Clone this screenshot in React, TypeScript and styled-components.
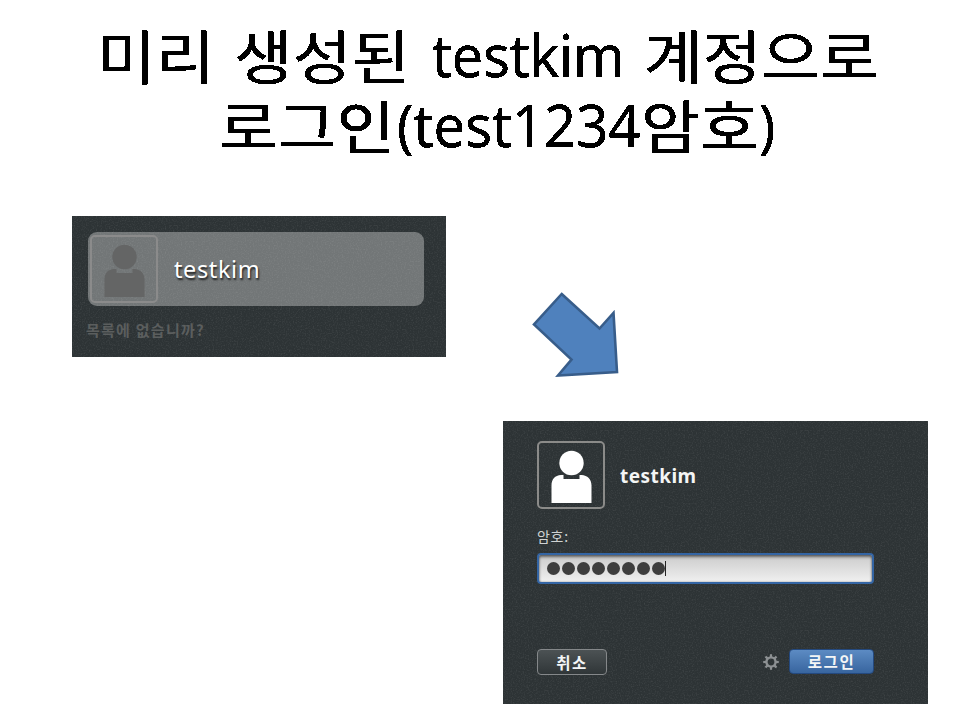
import React from "react";
import styled, { createGlobalStyle, css } from "styled-components";

const noise = `url("data:image/svg+xml,${encodeURIComponent(
  '<svg xmlns="http://www.w3.org/2000/svg" width="200" height="200"><filter id="n"><feTurbulence type="fractalNoise" baseFrequency="0.75" numOctaves="2" seed="4" stitchTiles="stitch"/><feColorMatrix values="0 0 0 0 1  0 0 0 0 1  0 0 0 0 1  0.9 0 0 0 -0.42"/></filter><rect width="200" height="200" filter="url(#n)" opacity="0.22"/></svg>'
)}")`;

const GlobalStyle = createGlobalStyle`
  * { box-sizing: border-box; }
  body { margin: 0; background: #fff; overflow: hidden; }
`;

const Slide = styled.main`
  width: 960px;
  height: 720px;
  background: #fff;
  overflow: hidden;
  font-family: "Noto Sans", "Noto Sans CJK KR", sans-serif;
`;

const Title = styled.h1`
  margin: 0;
  height: 216px;
  padding-top: 22px;
  font-weight: 400;
  color: #000;
  filter: url(#crisp);
`;

const TitleLine = styled.span<{ $indent: number }>`
  display: flex;
  height: 70px;
  padding-left: ${(p) => p.$indent}px;
  line-height: 70px;
  white-space: nowrap;
`;

const Word = styled.span<{ $width: number; $latin?: boolean; $scale?: number }>`
  flex: none;
  width: ${(p) => p.$width}px;
  transform-origin: 0 50%;
  ${(p) =>
    p.$latin
      ? css`
          height: 70px;
          font: 400 59px/65px "Open Sans", sans-serif;
          -webkit-text-stroke: 0.6px #000;
        `
      : css`
          height: 70px;
          font: 400 58px/64px "Noto Sans CJK KR", sans-serif;
          -webkit-text-stroke: 0.5px #000;
        `}
  transform: scaleX(${(p) => p.$scale ?? (p.$latin ? 1 : 1.1)});
`;

const Stage = styled.div`
  display: grid;
  grid-template-columns: 431px 425px;
  grid-template-rows: 205px 283px;
  margin-left: 72px;
`;

const Panel = styled.section`
  background: ${noise}, #2d3335;
`;

const UserListPanel = styled(Panel)`
  width: 374px;
  height: 141px;
  padding: 16px 22px 0 16px;
`;

const LoginPanel = styled(Panel)`
  grid-column: 2;
  height: 283px;
  padding: 20px 54px 0 34px;
`;

const UserRow = styled.div`
  display: flex;
  align-items: center;
  height: 74px;
  padding-left: 2px;
  border-radius: 9px;
  background: ${noise}, #727677;
`;

const UserName = styled.span`
  margin: 0 0 1px 16px;
  font: 400 23.5px/32px "Noto Sans", sans-serif;
  letter-spacing: 0.6px;
  color: #fff;
  text-shadow: 1px 2px 2px rgba(0, 0, 0, 0.75);
`;

const NotListed = styled.div`
  margin: 14px 0 0 -2px;
  font: 700 15px/20px "Noto Sans CJK KR", sans-serif;
  letter-spacing: 1.25px;
  color: #5b5e5e;
`;

const ArrowSlot = styled.div`
  padding: 75px 0 0 28px;
`;

const AccountHeader = styled.div`
  display: flex;
  align-items: center;
  height: 68px;
`;

const AccountName = styled.strong`
  margin: 1px 0 0 15px;
  font: 700 19px/28px "Noto Sans", sans-serif;
  letter-spacing: 0.45px;
  color: #f4f5f5;
`;

const PasswordLabel = styled.label`
  display: block;
  margin-top: 17px;
  font: 400 14px/20px "Noto Sans CJK KR", sans-serif;
  letter-spacing: 0.7px;
  color: #cfd2d2;
`;

const PasswordField = styled.div`
  display: flex;
  align-items: center;
  gap: 2px;
  width: 337px;
  height: 31px;
  margin-top: 7px;
  padding-left: 7.5px;
  border: 2px solid #3465a4;
  border-radius: 4px;
  background: linear-gradient(#cbcbcb, #f0f0f0);
  box-shadow: inset 0 2px 3px rgba(0, 0, 0, 0.5), inset 0 0 2px rgba(0, 0, 0, 0.35);
`;

const Dot = styled.span`
  width: 13px;
  height: 13px;
  border-radius: 50%;
  background: #3e3e3e;
`;

const Caret = styled.span`
  width: 1px;
  height: 15px;
  margin: 0 0 0 -1.5px;
  background: #222;
`;

const Actions = styled.div`
  display: flex;
  align-items: center;
  width: 337px;
  margin-top: 65px;
  height: 26px;
`;

const Button = styled.button<{ $primary?: boolean }>`
  width: ${(p) => (p.$primary ? 85 : 70)}px;
  height: ${(p) => (p.$primary ? 25 : 26)}px;
  margin-bottom: ${(p) => (p.$primary ? 1 : 0)}px;
  padding: 0 0 1px;
  border: ${(p) => (p.$primary ? "1px solid #24497f" : "1px solid #85888a")};
  border-radius: 4px;
  background: ${(p) =>
    p.$primary ? "linear-gradient(#5c8bc3, #38659f)" : "linear-gradient(#4c5254, #303638)"};
  color: #f3f5f6;
  font: 700 15.5px/20px "Noto Sans CJK KR", sans-serif;
  letter-spacing: 1.6px;
`;

const GearSlot = styled.span`
  display: flex;
  margin: 0 10px 0 auto;
`;

const Drawing = styled.svg`
  display: block;
  flex: none;
`;

function Avatar({ fill, stroke }: { fill: string; stroke: string }) {
  return (
    <Drawing width="68" height="68" viewBox="0 0 68 68">
      <rect x="1" y="1" width="66" height="66" rx="4" fill="none" stroke={stroke} strokeWidth="2" />
      <path
        fill={fill}
        d="M14.5 62V44.500C14.500 38 18 34.500 24 34H26.500V38H42.500V34H44.500C50.500 34.500 54.500 38 54.500 44.500V62Z"
      />
      <circle cx="34.500" cy="22" r="12.200" fill={fill} />
    </Drawing>
  );
}

function Gear() {
  return (
    <Drawing width="16" height="16" viewBox="0 0 16 16" fill="none" stroke="#8d9193">
      <circle cx="8" cy="8" r="4.600" strokeWidth="2.400" />
      {[0, 45, 90, 135, 180, 225, 270, 315].map((angle) => (
        <path key={angle} d="M8 3.200V0.200" strokeWidth="2.200" transform={`rotate(${angle} 8 8)`} />
      ))}
    </Drawing>
  );
}

export default function App() {
  return (
    <Slide>
      <GlobalStyle />
      <Title>
        <TitleLine $indent={97}>
          <Word $width={137}>미리</Word>
          <Word $width={198}>생성된</Word>
          <Word $width={212} $latin $scale={0.945}>testkim</Word>
          <Word $width={235}>계정으로</Word>
        </TitleLine>
        <TitleLine $indent={219}>
          <Word $width={178}>로그인</Word>
          <Word $width={244} $latin $scale={0.952}>(test1234</Word>
          <Word $width={118}>암호</Word>
          <Word $width={20} $latin $scale={0.93}>)</Word>
        </TitleLine>
      </Title>
      <Stage>
        <UserListPanel>
          <UserRow>
            <Avatar fill="#646565" stroke="#8b8b8b" />
            <UserName>testkim</UserName>
          </UserRow>
          <NotListed>목록에 없습니까?</NotListed>
        </UserListPanel>
        <ArrowSlot>
          <Drawing width="90" height="90" viewBox="531 291 90 90">
            <path
              d="M561.700 294L599.500 328.500L613.500 313L617 372L558 375.500L571.500 359.500L534 324.500Z"
              fill="#4f81bd"
              stroke="#385d8a"
              strokeWidth="2.600"
            />
          </Drawing>
        </ArrowSlot>
        <LoginPanel>
          <AccountHeader>
            <Avatar fill="#ffffff" stroke="#8b8b89" />
            <AccountName>testkim</AccountName>
          </AccountHeader>
          <PasswordLabel>암호:</PasswordLabel>
          <PasswordField>
            {Array.from({ length: 8 }, (_, i) => (
              <Dot key={i} />
            ))}
            <Caret />
          </PasswordField>
          <Actions>
            <Button>취소</Button>
            <GearSlot>
              <Gear />
            </GearSlot>
            <Button $primary>로그인</Button>
          </Actions>
        </LoginPanel>
      </Stage>
      <Drawing width="0" height="0">
        <filter id="crisp" x="0" y="0" width="1" height="1">
          <feComponentTransfer>
            <feFuncA type="discrete" tableValues="0 1" />
          </feComponentTransfer>
        </filter>
      </Drawing>
    </Slide>
  );
}
